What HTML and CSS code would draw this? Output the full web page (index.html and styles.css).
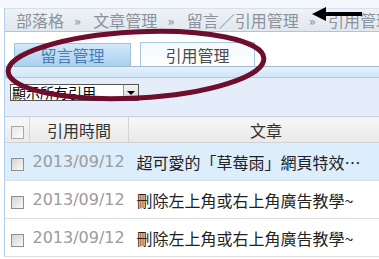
FILE: index.html
```html
<!DOCTYPE html>
<html lang="zh-Hant">
<head>
    <meta charset="UTF-8">
    <title>引用管理</title>
    <link rel="stylesheet" href="styles.css">
</head>
<body>
    <div class="top-strip"></div>
    <div class="page">
        <div class="crumbs">
            <span>部落格</span><span class="sep">»</span><span>文章管理</span><span class="sep">»</span><span>留言／引用管理</span><span class="sep">»</span><span>引用管理</span>
        </div>

        <div class="tabs">
            <a class="tab">留言管理</a>
            <a class="tab active">引用管理</a>
        </div>
        <div class="tab-band"></div>

        <div class="filter">
            <div class="select">顯示所有引用<span class="drop"><span class="tri"></span></span></div>
        </div>

        <table class="list">
            <thead>
                <tr>
                    <th class="col-check"><span class="check"></span></th>
                    <th class="col-time">引用時間</th>
                    <th class="col-title">文章</th>
                </tr>
            </thead>
            <tbody>
                <tr class="hl">
                    <td class="col-check"><span class="check"></span></td>
                    <td class="col-time">2013/09/12</td>
                    <td class="col-title">超可愛的「草莓雨」網頁特效…</td>
                </tr>
                <tr>
                    <td class="col-check"><span class="check"></span></td>
                    <td class="col-time">2013/09/12</td>
                    <td class="col-title">刪除左上角或右上角廣告教學~</td>
                </tr>
                <tr>
                    <td class="col-check"><span class="check"></span></td>
                    <td class="col-time">2013/09/12</td>
                    <td class="col-title">刪除左上角或右上角廣告教學~</td>
                </tr>
            </tbody>
        </table>
    </div>

    <!-- annotation marks drawn over the screenshot -->
    <svg class="marks" width="379" height="259" viewBox="0 0 379 259">
        <ellipse cx="136" cy="65" rx="128" ry="33" transform="rotate(-3 136 65)" fill="none" stroke="#6e0d2c" stroke-width="5"/>
        <path d="M312 14 L326 7 L326 12 L362 12 L362 16 L326 16 L326 21 Z" fill="#000"/>
    </svg>
</body>
</html>
```

FILE: styles.css
```css
html, body {
    margin: 0;
    overflow: hidden;
}

body {
    width: 379px;
    height: 259px;
    position: relative;
    background: #fff;
    font-family: "Noto Sans CJK TC", "Noto Sans", sans-serif;
    color: #222;
}

.top-strip {
    height: 8px;
    background: #f3f7fb;
}

.page {
    margin-left: 4px;
    border-left: 1px solid #b3d0ec;
    width: 420px;
}

.crumbs {
    height: 22px;
    line-height: 22px;
    padding-left: 11px;
    border-top: 1px solid #d8e1ea;
    border-bottom: 1px solid #b4c4d4;
    background: linear-gradient(#eef2f6, #e0e7ee);
    color: #8b929b;
    font-size: 16px;
    white-space: nowrap;
}

.crumbs .sep {
    font-family: "DejaVu Sans", sans-serif;
    font-size: 12px;
    padding: 0 12px 0 10px;
    vertical-align: 1px;
}

.tabs {
    display: flex;
    align-items: flex-end;
    gap: 9px;
    height: 34px;
    padding-left: 9px;
}

.tab {
    width: 115px;
    height: 22px;
    line-height: 22px;
    text-align: center;
    font-size: 16px;
    border: 1px solid #9fc3e5;
    border-bottom: none;
    background: linear-gradient(#d3e8f9, #a9cff0);
    color: #4a7db5;
}

.tab.active {
    width: 113px;
    height: 23px;
    line-height: 24px;
    background: linear-gradient(#f4f9fd, #fff);
    border-color: #a9c8e3;
    color: #4b4b4b;
}

.tab-band {
    height: 10px;
    border-top: 1px solid #a2bbd0;
    border-bottom: 1px solid #b5c9db;
    background: linear-gradient(#e3f1fc, #d0e5f7);
}

.filter {
    height: 38px;
    background: #e4edf9;
    padding: 6px 0 0 5px;
    box-sizing: border-box;
}

.select {
    width: 126px;
    height: 15px;
    border: 1px solid #555;
    background: #fff;
    font-size: 14px;
    line-height: 15px;
    color: #000;
    padding-left: 1px;
    position: relative;
    box-sizing: content-box;
    display: flex;
    justify-content: space-between;
}

.drop {
    width: 14px;
    height: 15px;
    background: linear-gradient(#f4f4f4, #d6d6d6);
    border-left: 1px solid #999;
    display: flex;
    align-items: center;
    justify-content: center;
}

.tri {
    width: 0;
    height: 0;
    border-left: 4px solid transparent;
    border-right: 4px solid transparent;
    border-top: 4px solid #000;
}

.list {
    border-collapse: collapse;
    width: 400px;
    table-layout: fixed;
}

.list th {
    height: 25px;
    padding: 0;
    font-weight: normal;
    font-size: 16px;
    color: #333;
    background: linear-gradient(#f7f7f7, #e9e9e9);
    border-top: 1px solid #c9d3de;
    border-bottom: 1px solid #d2d2d2;
}

.list th + th {
    border-left: 1px solid #d4d4d4;
}

.list td {
    height: 37px;
    padding: 0;
    border-bottom: 1px solid #dedede;
    font-size: 16px;
    white-space: nowrap;
}

.list tr.hl td {
    background: #dcedfc;
}

.col-check {
    width: 24px;
    text-align: center;
}

.col-time {
    width: 98px;
    text-align: center;
}

.list td.col-time {
    font-family: "DejaVu Sans", sans-serif;
    color: #9b9b9b;
    text-align: left;
    padding-left: 3px;
}

.list td.col-title {
    padding-left: 8px;
    color: #222;
}

.list th.col-title {
    padding-right: 2px;
}

.check {
    display: inline-block;
    width: 11px;
    height: 11px;
    border: 1px solid #8f8f8f;
    background: linear-gradient(135deg, #d4d4d4, #f9f9f9);
    vertical-align: middle;
}

th .check {
    border-color: #a9a9a9;
    background: linear-gradient(135deg, #e6e6e6, #fcfcfc);
}

.marks {
    position: absolute;
    top: 0;
    left: 0;
    pointer-events: none;
}
```
